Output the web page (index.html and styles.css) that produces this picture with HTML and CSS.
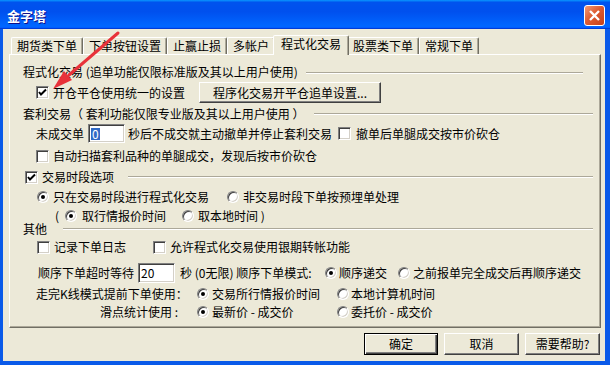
FILE: index.html
```html
<!DOCTYPE html>
<html lang="zh">
<head>
    <meta charset="UTF-8">
    <meta name="viewport" content="width=device-width, initial-scale=1.0">
    <title>金字塔</title>
    <link rel="stylesheet" href="styles.css">
</head>
<body>
<div class="window">
    <div class="titlebar">
        <span class="title">金字塔</span>
        <span class="close">
            <svg width="19" height="19" viewBox="0 0 19 19"><path d="M5 5L14 14M14 5L5 14" stroke="#fff" stroke-width="2.4"/></svg>
        </span>
    </div>
    <div class="client">
        <div class="tabs">
            <span class="tab">期货类下单</span>
            <span class="tab">下单按钮设置</span>
            <span class="tab">止赢止损</span>
            <span class="tab">多帐户</span>
            <span class="tab active">程式化交易</span>
            <span class="tab">股票类下单</span>
            <span class="tab">常规下单</span>
        </div>
        <div class="panel">
            <div class="row head">
                <span>程式化交易 (追单功能仅限标准版及其以上用户使用)</span>
                <span class="line line-first"></span>
            </div>
            <div class="row r-unify">
                <span class="cb"><span class="box"><svg viewBox="0 0 11 11"><path d="M2 5l2 2.5 5-5" fill="none" stroke="#000" stroke-width="2"/></svg></span>开仓平仓使用统一的设置</span>
                <button class="btn btn-setup">程序化交易开平仓追单设置...</button>
            </div>

            <div class="row head r-arb-head">
                <span>套利交易（ 套利功能仅限专业版及其以上用户使用 ）</span>
                <span class="line line-arb"></span>
            </div>
            <div class="row r-arb">
                <span>未成交单</span>
                <span class="edit e-arb"><span class="sel">0</span></span>
                <span class="after-edit">秒后不成交就主动撤单并停止套利交易</span>
                <span class="cb cb-cancel"><span class="box"></span>撤单后单腿成交按市价砍仓</span>
            </div>
            <div class="row r-scan">
                <span class="cb"><span class="box"></span>自动扫描套利品种的单腿成交，发现后按市价砍仓</span>
            </div>

            <div class="row head r-session">
                <span class="cb"><span class="box"><svg viewBox="0 0 11 11"><path d="M2 5l2 2.5 5-5" fill="none" stroke="#000" stroke-width="2"/></svg></span>交易时段选项</span>
                <span class="line line-session"></span>
            </div>
            <div class="row r-mode">
                <span class="rb"><span class="dot on"></span>只在交易时段进行程式化交易</span>
                <span class="rb rb-second"><span class="dot"></span>非交易时段下单按预埋单处理</span>
            </div>
            <div class="row r-clock">
                <span class="paren">(</span>
                <span class="rb rb-wide"><span class="dot on"></span>取行情报价时间</span>
                <span class="rb rb-local"><span class="dot"></span>取本地时间 )</span>
            </div>

            <div class="row head r-other">
                <span>其他</span>
                <span class="line line-other"></span>
            </div>
            <div class="row r-log">
                <span class="cb"><span class="box"></span>记录下单日志</span>
                <span class="cb cb-bank"><span class="box"></span>允许程式化交易使用银期转帐功能</span>
            </div>
            <div class="row r-seq">
                <span>顺序下单超时等待</span>
                <span class="edit e-seq">20</span>
                <span class="seq-label">秒 (0无限) 顺序下单模式:</span>
                <span class="rb rb-tight"><span class="dot on"></span>顺序递交</span>
                <span class="rb rb-after"><span class="dot"></span>之前报单完全成交后再顺序递交</span>
            </div>
            <div class="kline">
                <span>走完K线模式提前下单使用：</span>
                <span class="rb rb-col2"><span class="dot on"></span>交易所行情报价时间</span>
                <span class="rb rb-col3"><span class="dot"></span>本地计算机时间</span>
                <span class="indent">滑点统计使用 :</span>
                <span class="rb rb-col2"><span class="dot on"></span>最新价 - 成交价</span>
                <span class="rb rb-col3"><span class="dot"></span>委托价 - 成交价</span>
            </div>
        </div>
        <div class="buttons">
            <button class="btn btn-default btn-ok">确定</button>
            <button class="btn">取消</button>
            <button class="btn">需要帮助?</button>
        </div>
    </div>

    <!-- 标注箭头 -->
    <svg class="arrow" width="610" height="365" viewBox="0 0 610 365">
        <path d="M118 33L69 75" stroke="#e8323a" stroke-width="3" stroke-linecap="round"/>
        <polygon points="53,89 72,80 64,71" fill="#e8323a"/>
    </svg>
</div>
</body>
</html>
```

FILE: styles.css
```css
* {
    box-sizing: border-box;
}
body {
    margin: 0;
    font-family: "Noto Sans CJK SC", "Liberation Sans", sans-serif;
    font-size: 12px;
    color: #000;
}
.window {
    position: relative;
    width: 610px;
    height: 365px;
    display: flex;
    flex-direction: column;
    background: #0a5ae9;
}
.titlebar {
    height: 29px;
    display: flex;
    align-items: center;
    justify-content: space-between;
    padding: 0 5px 0 7px;
    background: linear-gradient(180deg, #0997ff, #0053ee 8%, #0050ee 40%, #0066ff 88%, #0066ff 93%, #005bff 95%, #003dd7 96%, #003dd7);
}
.title {
    color: #fff;
    font-weight: bold;
    font-size: 13px;
    line-height: 13px;
    margin-top: 2px;
    text-shadow: 1px 1px #0f1089;
}
.close {
    width: 21px;
    height: 21px;
    margin-top: 2px;
    border: 1px solid #fff;
    border-radius: 3px;
    background: linear-gradient(135deg, #f29a74, #de5c32 45%, #c4401b);
    display: flex;
    align-items: center;
    justify-content: center;
}
.client {
    flex: 1;
    display: flex;
    flex-direction: column;
    background: #ece9d8;
    border: solid #0a5ae9;
    border-width: 0 5px 4px 3px;
    padding: 0 4px 6px 6px;
}

/* tabs */
.tabs {
    height: 25px;
    display: flex;
    align-items: flex-end;
    padding-left: 2px;
}
.tab {
    height: 17px;
    padding: 0 5px;
    display: flex;
    align-items: center;
    line-height: 12px;
    white-space: nowrap;
    border: 1px solid;
    border-bottom: none;
    border-color: #fff #716f64 transparent #fff;
    border-radius: 2px 2px 0 0;
    box-shadow: inset -1px 0 #aca899;
}
.tab.active {
    position: relative;
    z-index: 1;
    height: 20px;
    margin: 0 -2px -1px;
    padding: 0 7px 3px;
    background: #ece9d8;
}
.panel {
    height: 274px;
    border: 1px solid;
    border-color: #fff #716f64 #716f64 #fff;
    box-shadow: inset -1px -1px #aca899;
    padding: 11px 0 0 13px;
}

/* rows */
.row {
    display: flex;
    align-items: center;
    height: 12px;
    line-height: 12px;
    white-space: nowrap;
}
.head .line {
    flex: 1;
    margin: 0 7px 0 8px;
    border-top: 1px solid #aca899;
    border-bottom: 1px solid #fff;
}
.head .line-first {
    margin-right: 17px;
    margin-top: 2px;
}
.head .line-arb {
    margin-left: 10px;
}
.head .line-session {
    margin-left: 14px;
}
.head .line-other {
    margin-left: 16px;
}
.r-unify {
    margin: 4px 0 0 13px;
    height: 21px;
}
.r-arb-head {
    margin-top: 5px;
}
.r-arb {
    margin: 4px 0 0 13px;
    height: 19px;
}
.r-scan {
    margin: 7px 0 0 13px;
}
.r-session {
    margin: 9px 0 0 2px;
}
.r-mode {
    margin: 8px 0 0 14px;
}
.r-clock {
    margin: 7px 0 0 32px;
}
.r-other {
    margin-top: 1px;
}
.r-log {
    margin: 6px 0 0 14px;
}
.r-seq {
    margin: 10px 0 0 15px;
    height: 20px;
}

/* controls */
.cb, .rb {
    display: flex;
    align-items: center;
    gap: 4px;
}
.box {
    flex: none;
    width: 13px;
    height: 13px;
    border: 1px solid;
    border-color: #808080 #fff #fff #808080;
    box-shadow: inset 1px 1px #404040, inset -1px -1px #d4d0c8;
    background: #fff;
}
.box svg {
    display: block;
    width: 11px;
    height: 11px;
}
.dot {
    flex: none;
    width: 12px;
    height: 12px;
    border-radius: 50%;
    border: 1px solid;
    border-color: #808080 #fff #fff #808080;
    box-shadow: inset 1px 1px #404040, inset -1px -1px #d4d0c8;
    background: #fff;
    display: flex;
    align-items: center;
    justify-content: center;
}
.dot.on::after {
    content: "";
    width: 4px;
    height: 4px;
    border-radius: 50%;
    background: #000;
}
.edit {
    width: 37px;
    height: 19px;
    border: 1px solid;
    border-color: #808080 #fff #fff #808080;
    box-shadow: inset 1px 1px #404040, inset -1px -1px #d4d0c8;
    background: #fff;
    display: flex;
    align-items: center;
    padding-left: 2px;
}
.sel {
    background: #316ac5;
    color: #fff;
    padding: 0 1px;
}
.e-arb {
    margin-left: 4px;
}
.after-edit {
    margin-left: 3px;
}
.cb-cancel {
    margin-left: 6px;
    gap: 5px;
}
.rb-second {
    margin-left: 18px;
}
.paren {
    width: 10px;
}
.rb-wide {
    gap: 5px;
}
.rb-local {
    margin-left: 16px;
}
.cb-bank {
    margin-left: 27px;
}
.e-seq {
    margin-left: 4px;
    height: 20px;
}
.seq-label {
    width: 142px;
    margin-left: 5px;
}
.rb-tight {
    margin-left: 3px;
    gap: 2px;
}
.rb-after {
    margin-left: 11px;
    gap: 3px;
}
.kline {
    display: grid;
    grid-template-columns: 161px 140px auto;
    grid-auto-rows: 12px;
    row-gap: 6px;
    align-items: center;
    margin: 5px 0 0 13px;
    line-height: 12px;
    white-space: nowrap;
}
.kline .indent {
    padding-left: 64px;
}
.rb-col2 {
    gap: 3px;
}
.rb-col3 {
    gap: 2px;
}

/* buttons */
.btn {
    font: inherit;
    color: #000;
    line-height: 12px;
    padding: 0;
    background: #ece9d8;
    border: 1px solid;
    border-color: #fff #404040 #404040 #fff;
    box-shadow: inset -1px -1px #808080;
    white-space: nowrap;
}
.btn-setup {
    width: 182px;
    height: 21px;
    margin-left: 14px;
}
.buttons {
    display: flex;
    justify-content: flex-end;
    gap: 6px;
    height: 22px;
    margin-top: 5px;
    padding-right: 1px;
}
.buttons .btn {
    width: 75px;
    height: 22px;
}
.buttons .btn-ok {
    width: 74px;
}
.btn-default {
    border-color: #000;
    box-shadow: inset 1px 1px #fff, inset -1px -1px #404040, inset -2px -2px #808080;
}
.arrow {
    position: absolute;
    left: 0;
    top: 0;
    pointer-events: none;
}
```
